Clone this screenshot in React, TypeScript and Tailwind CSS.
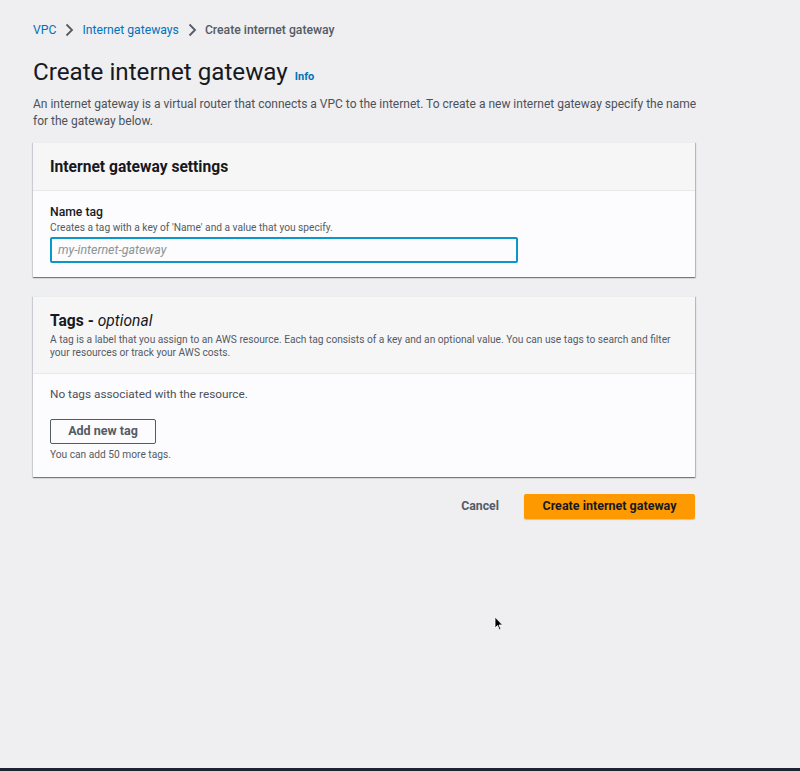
import React from "react";

function Chevron() {
  return (
    <svg width="10" height="14" viewBox="0 0 10 14" className="mx-[8px]">
      <path d="M2.5 1.5 L8 7 L2.5 12.5" fill="none" stroke="#545b64" strokeWidth="1.8" />
    </svg>
  );
}

const cardShadow =
  "shadow-[0_1px_1px_0_rgba(0,28,36,0.35),1px_1px_1px_0_rgba(0,28,36,0.2),-1px_1px_1px_0_rgba(0,28,36,0.1)]";

export default function App() {
  return (
    <div
      className="relative h-[771px] flex flex-col bg-[#efeef0] text-[#16191f]"
      style={{ fontFamily: "Roboto, 'Noto Sans', sans-serif" }}
    >
      <div className="flex-1 pl-[33px]">
        <div className="w-[662px]">
          {/* breadcrumb */}
          <div className="flex items-center h-[20px] mt-[20px] text-[12.2px]">
            <span className="text-[#0073bb]">VPC</span>
            <Chevron />
            <span className="text-[#0073bb]">Internet gateways</span>
            <Chevron />
            <span className="text-[#545b64] font-medium">Create internet gateway</span>
          </div>

          {/* title */}
          <div className="flex items-baseline mt-[16px] h-[32px]">
            <h1 className="text-[24.2px] leading-[32px] font-normal">Create internet gateway</h1>
            <span className="ml-[7px] text-[11px] font-bold text-[#0073bb]">Info</span>
          </div>
          <p className="mt-[8px] w-[672px] text-[12px] leading-[17px] text-[#4b525a]">
            An internet gateway is a virtual router that connects a VPC to the internet. To create a new internet gateway specify the name for the gateway below.
          </p>

          {/* card 1 */}
          <div className={`mt-[12px] bg-[#fcfbfd] border-t border-[#eaeded] ${cardShadow}`}>
            <div className="h-[48px] flex items-center px-[17px] bg-[#f6f6f7] border-b border-[#e8e8ea]">
              <h2 className="text-[15.6px] font-bold mt-[2px]">Internet gateway settings</h2>
            </div>
            <div className="px-[17px] pt-[13px] pb-[14px]">
              <div className="text-[12.2px] leading-[17px] font-medium">Name tag</div>
              <div className="text-[10.2px] leading-[13px] text-[#545b64]">
                Creates a tag with a key of 'Name' and a value that you specify.
              </div>
              <div className="mt-[3px] w-[468px] h-[26px] border-2 border-[#0a97c9] rounded-[2px] bg-[#fcfbfd] flex items-center px-[6px]">
                <span className="text-[12.4px] italic text-[#879596]">my-internet-gateway</span>
              </div>
            </div>
          </div>

          {/* card 2 */}
          <div className={`mt-[19px] bg-[#fcfbfd] border-t border-[#eaeded] ${cardShadow}`}>
            <div className="px-[17px] pt-[14px] pb-[14px] bg-[#f6f6f7] border-b border-[#e8e8ea]">
              <h2 className="text-[15.6px] leading-[20px] font-bold">
                Tags - <i className="font-normal">optional</i>
              </h2>
              <div className="mt-[2px] text-[10.2px] leading-[13px] text-[#545b64]">
                A tag is a label that you assign to an AWS resource. Each tag consists of a key and an optional value. You can use tags to search and filter your resources or track your AWS costs.
              </div>
            </div>
            <div className="px-[17px] pt-[12px] pb-[15px]">
              <div className="text-[11.8px] leading-[17px] text-[#4b525a]">No tags associated with the resource.</div>
              <button className="mt-[16px] h-[25px] w-[106px] border border-[#545b64] rounded-[2px] bg-[#fcfbfd] text-[12.5px] font-bold text-[#545b64]">
                Add new tag
              </button>
              <div className="mt-[4px] text-[10.2px] leading-[14px] text-[#545b64]">You can add 50 more tags.</div>
            </div>
          </div>

          {/* actions */}
          <div className="mt-[17px] flex justify-end items-center">
            <span className="text-[12.3px] font-bold text-[#545b64] mr-[25px]">Cancel</span>
            <button className="h-[25px] w-[171px] bg-[#ff9900] rounded-[2px] text-[12.5px] font-bold text-[#16191f] shadow-[0_1px_1px_0_rgba(0,28,36,0.2)]">
              Create internet gateway
            </button>
          </div>
        </div>
      </div>

      {/* cursor */}
      <svg className="absolute left-[494px] top-[616px]" width="10" height="15" viewBox="0 0 10 15">
        <path d="M1 1 L1 12 L3.5 9.5 L5.5 14 L7 13.3 L5 9 L8.5 9 Z" fill="#000" stroke="#fff" strokeWidth="0.8" />
      </svg>

      <div className="h-[3px] bg-[#1b2430]" />
    </div>
  );
}
